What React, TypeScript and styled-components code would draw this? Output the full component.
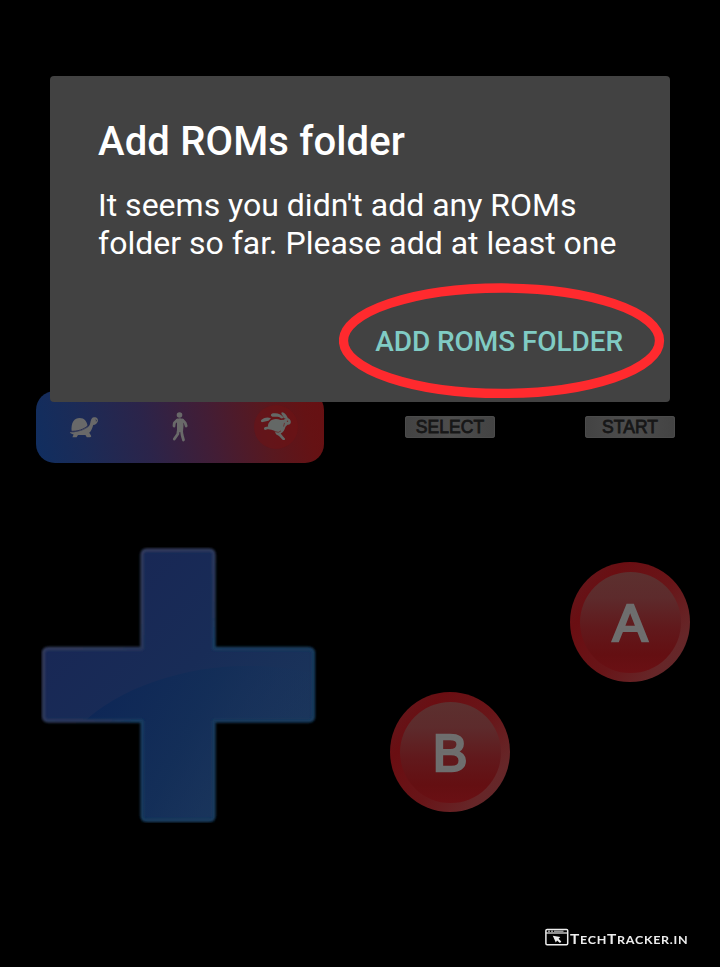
import React from "react";
import styled, { createGlobalStyle } from "styled-components";

const GlobalStyle = createGlobalStyle`
  *, *::before, *::after { box-sizing: border-box; }
  body { margin: 0; background: #000; }
`;

const Screen = styled.main`
  position: relative;
  display: flex;
  flex-direction: column;
  width: 720px;
  height: 967px;
  padding-top: 391px;
  overflow: hidden;
  background: #000;
  font-family: Roboto, "Liberation Sans", sans-serif;
`;

const TopControls = styled.div`
  display: flex;
  align-items: center;
  height: 72px;
  padding-left: 36px;
`;

const SpeedBar = styled.div`
  display: grid;
  grid-template-columns: repeat(3, 96px);
  align-items: center;
  width: 288px;
  height: 72px;
  border-radius: 19px;
  background: linear-gradient(76deg, #102e60 0%, #1b2b57 17%, #2b244a 38%, #431d35 60%, #58181f 78%, #651214 92%, #671012 100%);
`;

const SpeedSlot = styled.div<{ $active?: boolean }>`
  display: flex;
  align-items: center;
  justify-content: center;
  width: 44px;
  height: 44px;
  justify-self: center;
  border-radius: 50%;
  background: ${(p) => (p.$active ? "rgba(112, 18, 20, 0.5)" : "transparent")};

  svg { display: block; overflow: visible; }
`;

const MetaKeys = styled.div`
  display: flex;
  gap: 90px;
  margin-left: 81px;
`;

const MetaKey = styled.div`
  display: flex;
  align-items: center;
  justify-content: center;
  width: 90px;
  height: 22px;
  border-radius: 3px;
  background: linear-gradient(90deg, #434343, #4d4d4d 50%, #434343);
  box-shadow: inset 0 0 0 1px #4b4b4b;
  color: #171717;
  font: 400 17.5px/22px "Liberation Sans", Arial, sans-serif;
  letter-spacing: 0.1px;
  -webkit-text-stroke: 0.8px #171717;
`;

const PlayArea = styled.div`
  display: grid;
  grid-template-columns: 276px 120px 120px;
  column-gap: 60px;
  height: 276px;
  margin: 84px 0 0 41px;
`;

const Pad = styled.svg`
  display: block;
  width: 276px;
  height: 276px;
`;

const RoundButton = styled.div<{ $offset: number }>`
  display: flex;
  align-items: center;
  justify-content: center;
  width: 120px;
  height: 120px;
  margin: ${(p) => p.$offset}px 0 0 13px;
  border-radius: 50%;
  background: linear-gradient(128deg, #62171b 8%, #6a0e12 25%, #681518 55%, #662628 80%, #60282b 100%);
`;

const ButtonFace = styled.div`
  display: flex;
  align-items: center;
  justify-content: center;
  width: 101px;
  height: 101px;
  padding-top: 2px;
  border-radius: 50%;
  background: linear-gradient(180deg, #5c302f 0%, #5d2b2c 25%, #61191c 55%, #640f12 82%, #6a1014 100%);
  color: #6e6e6e;
  font: 400 52px/60px "Liberation Sans", Arial, sans-serif;
  -webkit-text-stroke: 2.6px #6e6e6e;
`;

const Dialog = styled.section`
  position: absolute;
  left: 50px;
  top: 76px;
  display: flex;
  flex-direction: column;
  width: 620px;
  height: 326px;
  padding: 42px 48px 0;
  border-radius: 4px;
  background: #424242;
`;

const DialogTitle = styled.h1`
  margin: 0;
  color: #fff;
  font-size: 40px;
  font-weight: 500;
  line-height: 48px;
  letter-spacing: 0.15px;
  white-space: nowrap;
`;

const DialogText = styled.p`
  margin: 20px 0 0;
  color: #fff;
  font-size: 32px;
  line-height: 38px;
  white-space: nowrap;
`;

const DialogAction = styled.button`
  align-self: flex-end;
  margin: 63px -1px 0 0;
  padding: 0;
  border: 0;
  background: none;
  color: #80cbc4;
  font: 500 28px/34px Roboto, sans-serif;
  letter-spacing: -0.08px;
  white-space: nowrap;
`;

const Highlight = styled.svg`
  position: absolute;
  left: 339px;
  top: 283px;
  width: 326px;
  height: 116px;
`;

const Credit = styled.footer`
  display: flex;
  align-items: center;
  height: 20px;
  margin: 104px 0 0 545px;
  color: #ededed;
`;

const CreditName = styled.span`
  margin: 4px 0 0 1px;
  font: 700 10.5px/18px Lato, sans-serif;
  letter-spacing: 0.6px;
  text-transform: uppercase;
  white-space: nowrap;
  transform: scaleX(1.19);
  transform-origin: left;
`;

const Initial = styled.span`
  font-size: 13px;
`;

const Turtle = () => (
  <svg width="30" height="22" viewBox="0 0 30 22" fill="#696969">
    <path d="M2.600 15.500C1.800 6 5.500 2 10.600 2c4.800 0 7.400 3.500 8 8-2 4-9 6-16 5.500z" />
    <path d="M.8 16.200C8 16.600 15.500 14.500 20 10c2-2.500 1-8.500 5-8.800 3-.2 4.600 2 3.800 4.400-.6 2-3 3.600-4.600 3.400-1.200 4-2 6-4 7.800l1.600 2.400c.8 1.200.3 2-.8 2h-3.200l-1.400-2.300H9l-1.400 2.300H3.400l1.200-2.700C2.600 18 1.200 17.200.8 16.200z" />
    <path d="M.8 15.200C8.500 15.800 15.500 13.400 19.800 8.800" fill="none" stroke="#24294f" strokeWidth="0.900" />
    <path d="M26.600 3.400l.8.600-.2 1.400" fill="none" stroke="#24294f" strokeWidth="0.700" />
  </svg>
);

const Walker = () => (
  <svg width="16" height="32" viewBox="0 0 16 32">
    <circle cx="7.500" cy="4" r="2.800" fill="#696969" />
    <path d="M5 8q3-1.500 5.500 0l1 6-.5 7H5z" fill="#696969" />
    <path d="M5.300 9L2.300 12 2 15M10.500 9l2.700 3 1 3M6.200 20l-.4 3-3.500 5M9.500 20l.6 4 1.400 5" fill="none" stroke="#696969" strokeWidth="2.800" strokeLinecap="round" strokeLinejoin="round" />
  </svg>
);

const Rabbit = () => (
  <svg width="32" height="32" viewBox="0 0 32 32">
    <g fill="#646866">
      <path d="M9.500 11C12 7.500 17 7.500 20.500 9l3.500-.3c2-2.700 5.500-2.200 6.500.8 1 2.800-.5 4.300-3 4.300l-2 2c-.8 3.500-2.500 5.600-4.800 6.700l1.800 2.300 2.400 2.600c.8 1.600-1.400 2.300-2.600 1.100L19 25l-3-1.800-1.500-3.400c-3-.8-5.500-2.300-8.500-1-2.300.6-2.800-2-.7-2.800l2.800-.4C7.800 14 8.200 12.400 9.500 11z" />
      <path d="M21 7.500c-1.500-2-4.500-1.800-7.200-1.700-3.500.2-4-2.800-.6-3.500C17.500 1.600 21.500 3 24 7z" />
      <path d="M24.500 7.500C22.800 4.500 20.300 2.200 21.800 1.400 24 1 27 4.500 28.300 8z" />
      <path d="M11 7.200C7.500 6 4.500 6.500 1.500 8.800c-1.200 1.200-.4 2.700 1.400 2.300L8.500 9.800z" />
    </g>
    <path d="M15 20.500q3.500 2 6-.6M23.600 15.500l.9-3.600" fill="none" stroke="#6b2523" strokeWidth="0.800" />
    <circle cx="27.500" cy="10.300" r="0.700" fill="#6b2523" />
  </svg>
);

const cross =
  "M106 3H168Q173 3 173 8V101.500H267.500Q272.500 101.500 272.500 106.500V169Q272.500 174 267.500 174H173V268.500Q173 273.500 168 273.500H106Q101 273.500 101 268.500V174H7.500Q2.500 174 2.500 169V106.500Q2.500 101.500 7.500 101.500H101V8Q101 3 106 3Z";

const DPad = () => (
  <Pad viewBox="0 0 276 276">
    <defs>
      <linearGradient id="padFill" x1="40" y1="40" x2="235" y2="235" gradientUnits="userSpaceOnUse">
        <stop offset="0" stopColor="#182755" />
        <stop offset="0.480" stopColor="#182c57" />
        <stop offset="1" stopColor="#1b375c" />
      </linearGradient>
      <linearGradient id="padEdge" x1="70" y1="70" x2="185" y2="185" gradientUnits="userSpaceOnUse">
        <stop offset="0" stopColor="#303b5c" />
        <stop offset="0.420" stopColor="#28385a" />
        <stop offset="0.560" stopColor="#173c62" />
        <stop offset="1" stopColor="#183a5c" />
      </linearGradient>
      <linearGradient id="padShade" x1="50" y1="120" x2="240" y2="220" gradientUnits="userSpaceOnUse">
        <stop offset="0" stopColor="#0c2556" stopOpacity="0.950" />
        <stop offset="0.550" stopColor="#122e58" stopOpacity="0.800" />
        <stop offset="1" stopColor="#1a365e" stopOpacity="0.100" />
      </linearGradient>
      <clipPath id="padClip"><path d={cross} /></clipPath>
      <filter id="edgeSoft" x="-3%" y="-3%" width="106%" height="106%"><feGaussianBlur stdDeviation="0.900" /></filter>
    </defs>
    <path d={cross} fill="url(#padFill)" />
    <path d="M40 178C78 139 150 118 207 119c25 0 48 3 69 8v149H40z" fill="url(#padShade)" clipPath="url(#padClip)" />
    <path d={cross} fill="none" stroke="url(#padEdge)" strokeWidth="3.400" strokeLinejoin="round" filter="url(#edgeSoft)" />
  </Pad>
);

const BrowserMark = () => (
  <svg width="24" height="18" viewBox="0 0 24 18" fill="none" stroke="#ededed">
    <rect x="0.900" y="1.400" width="21.800" height="15.400" rx="1.200" strokeWidth="1.500" />
    <path d="M1 5h21.600" strokeWidth="1.200" />
    <path d="M3 3.200h2M6 3.200h2M9 3.200h9.500" strokeWidth="0.900" />
    <path d="M7.800 7.800l7.500 1.300-1.700 1.700 2.700 2.700-1.300 1.500-2.900-2.600-1.300 2z" fill="#ededed" stroke="none" />
  </svg>
);

export default function App() {
  return (
    <>
      <GlobalStyle />
      <Screen>
        <TopControls>
          <SpeedBar>
            <SpeedSlot><Turtle /></SpeedSlot>
            <SpeedSlot><Walker /></SpeedSlot>
            <SpeedSlot $active><Rabbit /></SpeedSlot>
          </SpeedBar>
          <MetaKeys>
            <MetaKey>SELECT</MetaKey>
            <MetaKey>START</MetaKey>
          </MetaKeys>
        </TopControls>
        <PlayArea>
          <DPad />
          <RoundButton $offset={145}><ButtonFace>B</ButtonFace></RoundButton>
          <RoundButton $offset={15}><ButtonFace>A</ButtonFace></RoundButton>
        </PlayArea>
        <Credit>
          <BrowserMark />
          <CreditName><Initial>T</Initial>ech<Initial>T</Initial>racker.in</CreditName>
        </Credit>
        <Dialog role="dialog">
          <DialogTitle>Add ROMs folder</DialogTitle>
          <DialogText>It seems you didn't add any ROMs<br />folder so far. Please add at least one</DialogText>
          <DialogAction>ADD ROMS FOLDER</DialogAction>
        </Dialog>
        <Highlight viewBox="0 0 326 116">
          <ellipse cx="162.500" cy="57.700" rx="158" ry="52.700" fill="none" stroke="#ff2a2e" strokeWidth="9.300" />
        </Highlight>
      </Screen>
    </>
  );
}
